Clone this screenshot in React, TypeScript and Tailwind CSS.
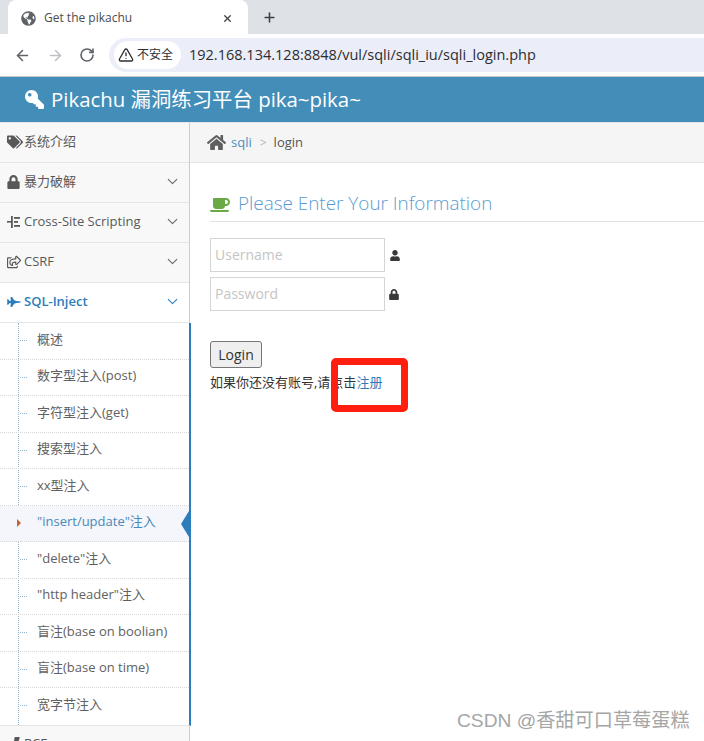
import { ArrowLeft, ArrowRight, ChevronDown, Plus, RotateCw, TriangleAlert, X } from 'lucide-react';
import { FaBolt, FaCoffee, FaFighterJet, FaGlobeAmericas, FaHome, FaKey, FaLock, FaRegShareSquare, FaTags, FaUser } from 'react-icons/fa';

const font = "font-['Open_Sans','Noto_Sans_CJK_SC',sans-serif]";

const subItems = [
    '概述',
    '数字型注入(post)',
    '字符型注入(get)',
    '搜索型注入',
    'xx型注入',
    '"insert/update"注入',
    '"delete"注入',
    '"http header"注入',
    '盲注(base on boolian)',
    '盲注(base on time)',
    '宽字节注入',
];

function XssIcon() {
    return (
        <svg viewBox="0 0 14 14" className="w-[14px] h-[14px]" fill="#585858">
            <rect x="0" y="6" width="4" height="1.6" />
            <rect x="4" y="1" width="1.8" height="12" />
            <rect x="7" y="2" width="6" height="1.8" />
            <rect x="7" y="6" width="4" height="1.8" />
            <rect x="7" y="10" width="6" height="1.8" />
        </svg>
    );
}

function NavItem({ icon, label, arrow = true, active = false }: { icon: React.ReactNode; label: string; arrow?: boolean; active?: boolean }) {
    return (
        <div className={`h-10 flex items-center pl-[7px] pr-[8px] pb-[2px] border-b border-[#e5e5e5] text-[13px] ${active ? 'bg-white text-[#2b7dbc] font-semibold' : 'bg-[#f8f8f8] text-[#585858]'}`}>
            <span className="w-[17px] flex items-center shrink-0">{icon}</span>
            <span className="flex-1 whitespace-nowrap">{label}</span>
            {arrow && <ChevronDown className={`w-[17px] h-[17px] ${active ? 'text-[#2b7dbc]' : 'text-[#666]'}`} strokeWidth={1.5} />}
        </div>
    );
}

export default function App() {
    return (
        <div className={`${font} w-[704px] h-[741px] overflow-hidden relative bg-white`}>
            {/* Browser tabs */}
            <div className="h-[34px] bg-[#dee1e6] flex items-end pl-2">
                <div className="w-[240px] h-[34px] bg-white rounded-t-lg flex items-center pl-[13px] pr-[15px] pt-[2px] text-[12px] text-[#4a4d51]">
                    <FaGlobeAmericas className="w-[15px] h-[15px] text-[#5f6368] mr-[8px]" />
                    <span className="flex-1">Get the pikachu</span>
                    <X className="w-[11px] h-[11px] text-[#444]" strokeWidth={3} />
                </div>
                <Plus className="w-[15px] h-[15px] ml-[14px] mb-[9px] text-[#3c4043]" strokeWidth={2.5} />
            </div>

            {/* Toolbar */}
            <div className="h-[43px] bg-white border-b border-[#c9c9c9] flex items-center pl-[14px]">
                <ArrowLeft className="w-[17px] h-[17px] text-[#5f6368]" strokeWidth={2.2} />
                <ArrowRight className="w-[17px] h-[17px] ml-4 text-[#bdc1c6]" strokeWidth={2.2} />
                <RotateCw className="w-[16px] h-[16px] ml-[15px] text-[#5f6368]" strokeWidth={2.4} />
                <div className="ml-[14px] flex-1 h-[34px] bg-[#ebeef8] rounded-l-[17px] flex items-center pl-[5px]">
                    <div className="h-[28px] w-[67px] bg-white rounded-[14px] flex items-center pl-[4px] text-[12px] text-[#303134] shrink-0">
                        <TriangleAlert className="w-[16px] h-[16px] mr-[3px]" strokeWidth={2} />
                        <span>不安全</span>
                    </div>
                    <span className="ml-[8px] text-[14.5px] text-[#2b2d31] whitespace-nowrap">192.168.134.128:8848/vul/sqli/sqli_iu/sqli_login.php</span>
                </div>
            </div>

            {/* Site header */}
            <div className="h-[45px] bg-[#438eb9] flex items-center pl-[25px] text-white text-[20.4px]">
                <FaKey className="w-[19px] h-[19px] mr-[7px] -scale-x-100" />
                <span className="whitespace-nowrap">Pikachu 漏洞练习平台 pika~pika~</span>
            </div>

            <div className="flex border-t border-[#e5e5e5]">
                {/* Sidebar */}
                <aside className="w-[190px] shrink-0 border-r border-[#cccccc] bg-white">
                    <NavItem icon={<FaTags className="w-[16px] h-[16px] text-[#585858]" />} label="系统介绍" arrow={false} />
                    <NavItem icon={<FaLock className="w-[13px] h-[14px] text-[#585858]" />} label="暴力破解" />
                    <NavItem icon={<XssIcon />} label="Cross-Site Scripting" />
                    <NavItem icon={<FaRegShareSquare className="w-[14px] h-[14px] text-[#585858]" />} label="CSRF" />
                    <NavItem icon={<FaFighterJet className="w-[14px] h-[14px] text-[#2b7dbc]" />} label="SQL-Inject" active />

                    <ul className="relative text-[13px] text-[#616161] border-r-2 border-b border-b-[#e5e5e5] border-r-[#2b7dbc] -mr-[2px]">
                        <div className="absolute left-[18px] top-0 bottom-0 border-l border-dotted border-[#8fb4d0]" />
                        {subItems.map((item, i) => (
                            <li
                                key={item}
                                className={`relative h-[36.5px] flex items-center pl-[37px] pb-[3px] whitespace-nowrap border-dotted border-[#d8d8d8] ${i < subItems.length - 1 ? 'border-b' : ''} ${i === 5 ? 'bg-[#f4f6fb] text-[#4b88b7]' : ''}`}
                            >
                                {i === 5 ? (
                                    <>
                                        <span className="absolute left-[17px] top-[13px] border-y-[4px] border-y-transparent border-l-[4px] border-l-[#c86139]" />
                                        <span className="absolute right-0 top-[5px] border-y-[13px] border-y-transparent border-r-[8px] border-r-[#2b7dbc]" />
                                    </>
                                ) : (
                                    <span className="absolute left-[20px] top-[17px] w-[7px] border-t border-dotted border-[#8fb4d0]" />
                                )}
                                {item}
                            </li>
                        ))}
                    </ul>
                    <NavItem icon={<FaBolt className="w-[13px] h-[14px] text-[#585858] ml-[5px]" />} label="RCE" />
                </aside>

                {/* Main content */}
                <main className="flex-1 min-w-0">
                    <div className="h-10 bg-[#f5f5f5] border-b border-[#e5e5e5] flex items-center pl-[17px] text-[13px] text-[#555]">
                        <FaHome className="w-[19px] h-[19px] text-[#5f5f5f] mr-[5px]" />
                        <span className="text-[#4c8fbd]">sqli</span>
                        <span className="mx-[8px] text-[#b2b6bf] text-[12px]">&gt;</span>
                        <span className="-ml-px">login</span>
                    </div>

                    <div className="pl-5 pt-[27px]">
                        <div className="h-[32px] flex items-center border-b border-[#dde3e8] pb-[4px]">
                            <FaCoffee className="w-[20px] h-[20px] text-[#69aa46] mr-[8px] mt-[2px]" />
                            <span className="text-[18.9px] text-[#5b9bd1] font-light">Please Enter Your Information</span>
                        </div>

                        <div className="mt-4 flex items-center">
                            <input readOnly placeholder="Username" className="w-[175px] h-[34px] border border-[#d5d5d5] px-[4px] pb-[2px] text-[14px] placeholder:text-[#c5c5c5] outline-none" />
                            <FaUser className="w-[10px] h-[11px] ml-[5px] text-[#393939]" />
                        </div>
                        <div className="mt-[5px] flex items-center">
                            <input readOnly placeholder="Password" className="w-[175px] h-[34px] border border-[#d5d5d5] px-[4px] pb-[2px] text-[14px] placeholder:text-[#c5c5c5] outline-none" />
                            <FaLock className="w-[10px] h-[11px] ml-[4px] text-[#393939]" />
                        </div>

                        <button className="mt-[30px] block w-[52px] h-[27px] bg-[#efefef] border border-[#767676] rounded-[3px] text-[14px] text-[#333]">Login</button>
                        <p className="mt-[3px] text-[13px] leading-[22px] text-[#333]">
                            如果你还没有账号,请点击<span className="text-[#337ab7]">注册</span>
                        </p>
                    </div>
                </main>
            </div>

            {/* Red annotation box drawn over the screenshot */}
            <div className="absolute left-[331px] top-[358px] w-[77px] h-[54px] border-[7px] border-[#ff1e10] rounded-[5px]" />

            {/* Watermark */}
            <div className="absolute left-[457px] top-[709px] text-[19.2px] leading-6 text-[#a6a6a6] font-['Liberation_Sans','Noto_Sans_CJK_SC',sans-serif] whitespace-nowrap">CSDN @香甜可口草莓蛋糕</div>
        </div>
    );
}
